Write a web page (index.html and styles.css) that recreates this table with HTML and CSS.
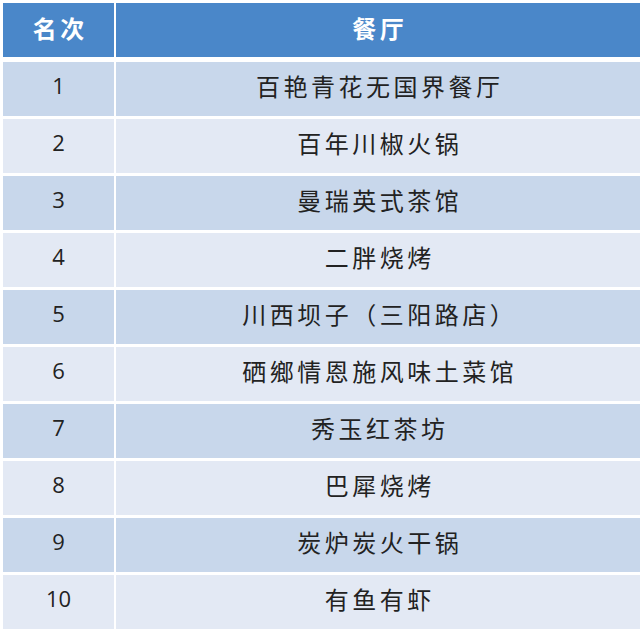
FILE: index.html
```html
<!DOCTYPE html>
<html lang="zh">
<head>
<meta charset="utf-8">
<link rel="stylesheet" href="styles.css">
</head>
<body>
<div class="table">
  <div class="row header"><div class="cell num">名次</div><div class="cell">餐厅</div></div>
  <div class="row odd"><div class="cell num">1</div><div class="cell">百艳青花无国界餐厅</div></div>
  <div class="row even"><div class="cell num">2</div><div class="cell">百年川椒火锅</div></div>
  <div class="row odd"><div class="cell num">3</div><div class="cell">曼瑞英式茶馆</div></div>
  <div class="row even"><div class="cell num">4</div><div class="cell">二胖烧烤</div></div>
  <div class="row odd"><div class="cell num">5</div><div class="cell">川西坝子（三阳路店）</div></div>
  <div class="row even"><div class="cell num">6</div><div class="cell">硒鄉情恩施风味土菜馆</div></div>
  <div class="row odd"><div class="cell num">7</div><div class="cell">秀玉红茶坊</div></div>
  <div class="row even"><div class="cell num">8</div><div class="cell">巴犀烧烤</div></div>
  <div class="row odd"><div class="cell num">9</div><div class="cell">炭炉炭火干锅</div></div>
  <div class="row even"><div class="cell num">10</div><div class="cell">有鱼有虾</div></div>
</div>
</body>
</html>
```
FILE: styles.css
```css
html, body {
  margin: 0;
  padding: 0;
  background: #ffffff;
}
body {
  padding: 3px 4px 0 3px;
  font-family: "Noto Sans CJK SC", "Noto Sans", sans-serif;
}
.table {
  display: flex;
  flex-direction: column;
  gap: 3px;
}
.row {
  display: grid;
  grid-template-columns: 111px 524px;
  column-gap: 2px;
  height: 54px;
}
.row.header {
  margin-bottom: 2px;
}
.cell {
  display: flex;
  align-items: center;
  justify-content: center;
  font-size: 24px;
  letter-spacing: 3.5px;
  padding-left: 3.5px;
  padding-bottom: 8px;
  color: #222222;
}
.header .cell {
  background: #4a87c9;
  color: #ffffff;
  font-weight: 700;
  padding-bottom: 5px;
}
.header .cell.num {
  font-family: "Noto Sans CJK SC", sans-serif;
  letter-spacing: 3.5px;
  padding-left: 3.5px;
  font-size: 24px;
}
.odd .cell { background: #c8d7eb; }
.even .cell { background: #e3e9f4; }
.num {
  font-family: "Open Sans", "Noto Sans", sans-serif;
  letter-spacing: 0;
  padding-left: 0;
  font-size: 22px;
}
```
